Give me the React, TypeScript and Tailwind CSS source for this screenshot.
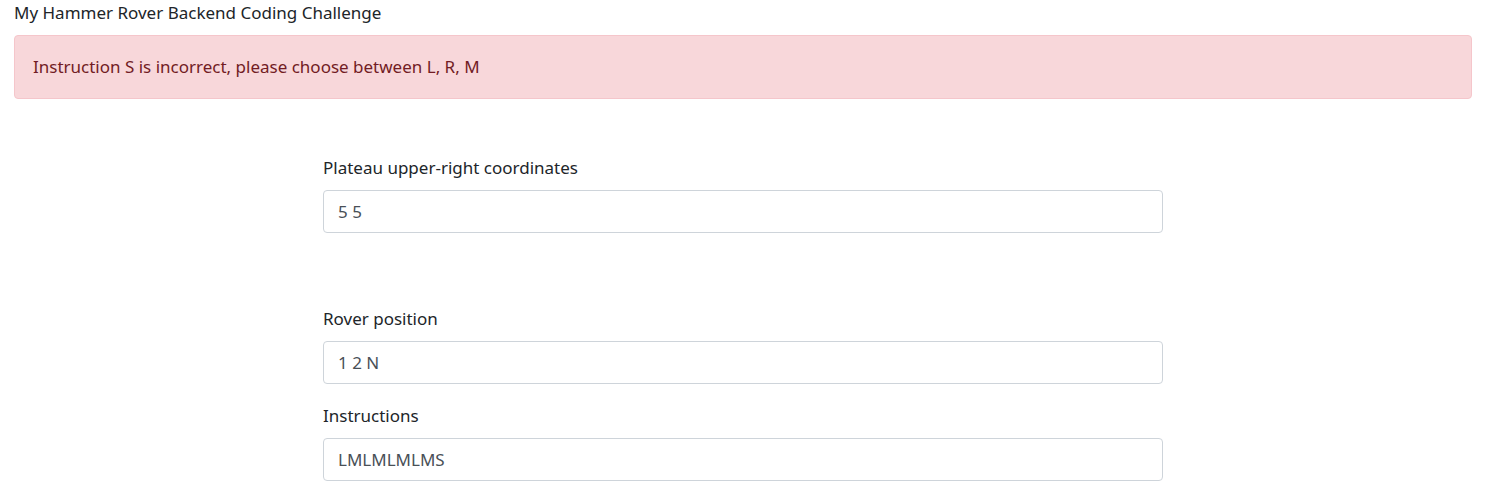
export default function App() {
  const font = { fontFamily: '"Noto Sans", "Segoe UI", sans-serif' };
  return (
    <div className="min-h-[496px] w-full bg-white text-[#212529]" style={font}>
      <div className="pl-[14px] pr-[17px]">
        <div className="text-[17px] leading-[26px] h-[26px]">My Hammer Rover Backend Coding Challenge</div>
        <div className="mt-[9px] h-[64px] flex items-center rounded-[4px] border border-[#f5c6cb] bg-[#f8d7da] px-[18px] text-[17px] text-[#721c24]">
          Instruction S is incorrect, please choose between L, R, M
        </div>
      </div>
      <div className="ml-[323px] w-[840px]">
        <div className="mt-[56px]">
          <label className="block text-[17px] leading-[26px] mb-[9px]">Plateau upper-right coordinates</label>
          <input
            readOnly
            value="5 5"
            className="block w-full h-[43px] rounded-[4px] border border-[#ced4da] bg-white px-[14px] text-[17px] text-[#495057] outline-none"
            style={font}
          />
        </div>
        <div className="mt-[73px]">
          <label className="block text-[17px] leading-[26px] mb-[9px]">Rover position</label>
          <input
            readOnly
            value="1 2 N"
            className="block w-full h-[43px] rounded-[4px] border border-[#ced4da] bg-white px-[14px] text-[17px] text-[#495057] outline-none"
            style={font}
          />
        </div>
        <div className="mt-[19px]">
          <label className="block text-[17px] leading-[26px] mb-[9px]">Instructions</label>
          <input
            readOnly
            value="LMLMLMLMS"
            className="block w-full h-[43px] rounded-[4px] border border-[#ced4da] bg-white px-[14px] text-[17px] text-[#495057] outline-none"
            style={font}
          />
        </div>
      </div>
    </div>
  );
}
